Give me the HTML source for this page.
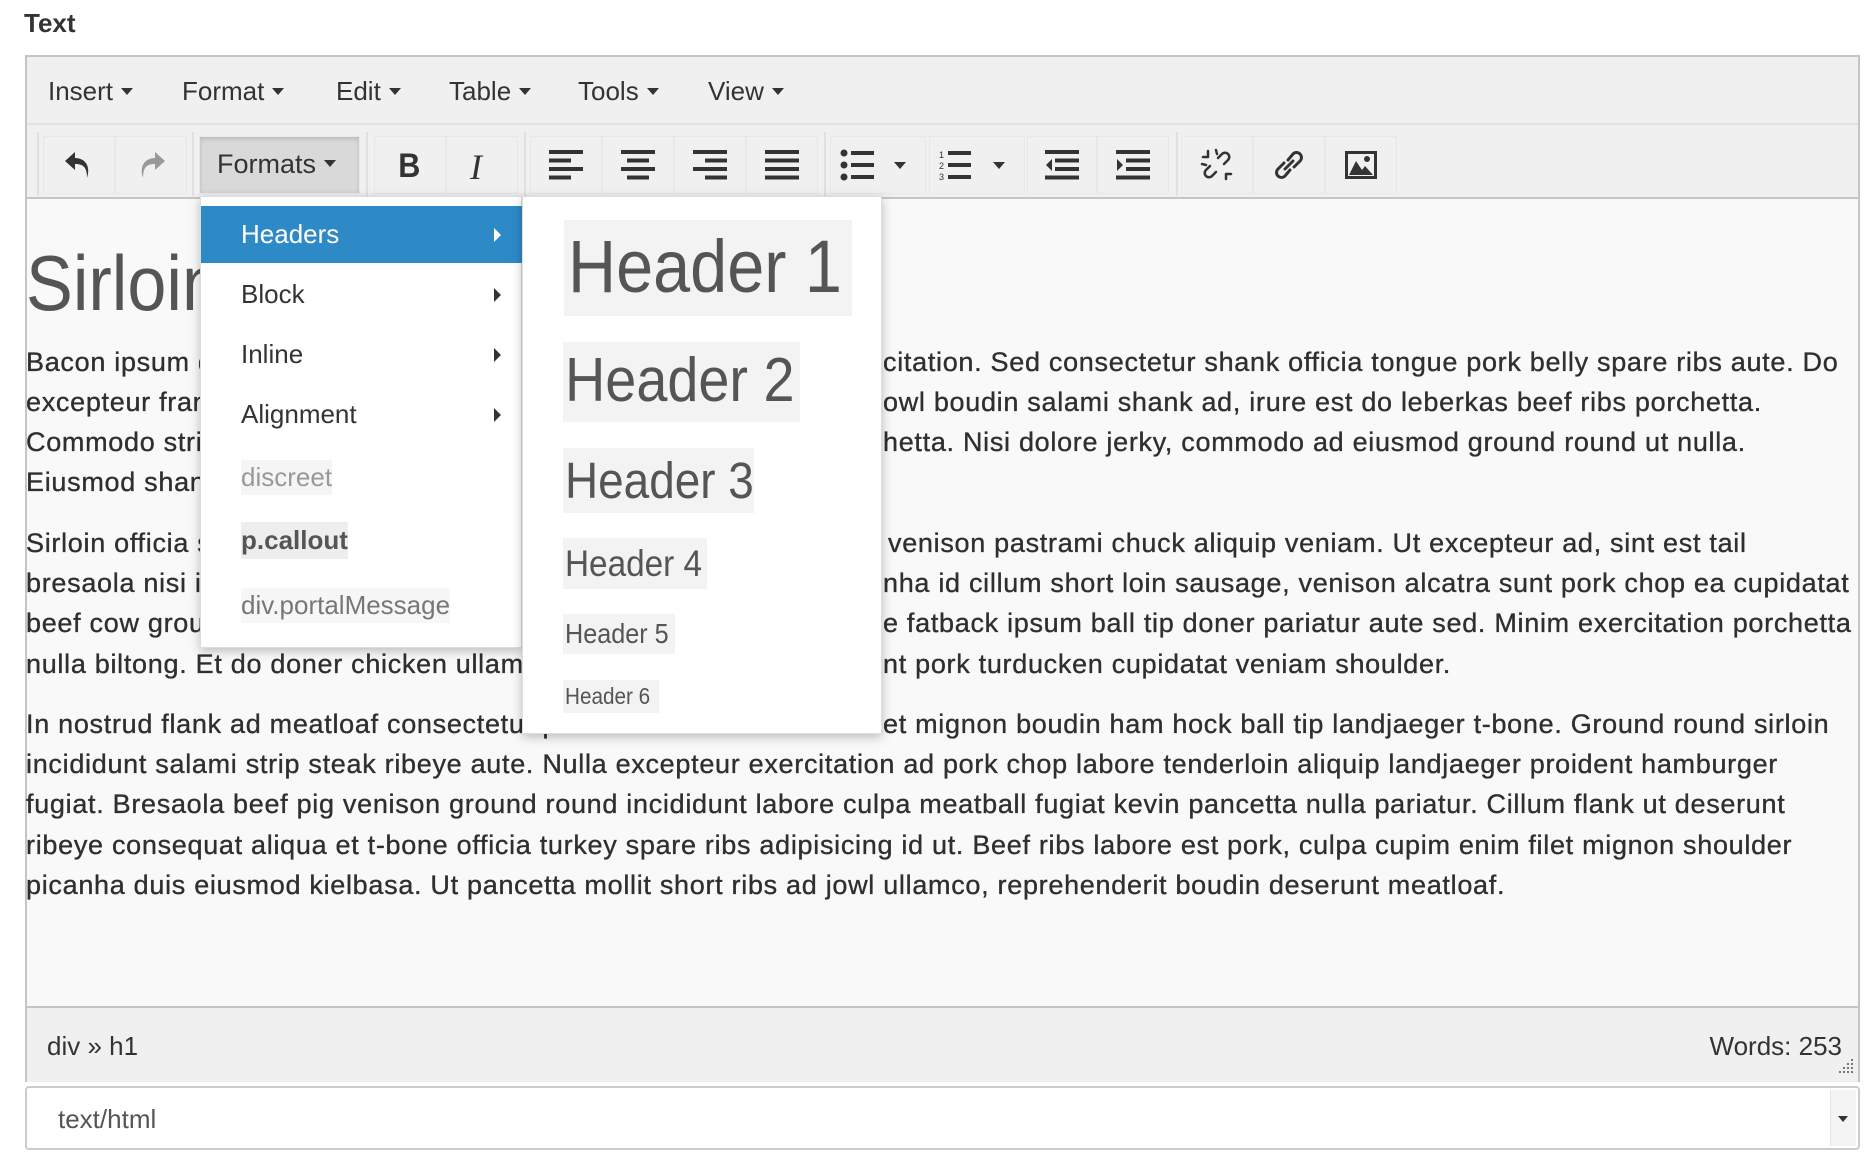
<!DOCTYPE html>
<html><head><meta charset="utf-8"><style>
*{box-sizing:border-box;margin:0;padding:0}
body{width:1872px;height:1158px;background:#fff;position:relative;overflow:hidden;font-family:"Liberation Sans",Arial,sans-serif;color:#333}
.a{position:absolute;white-space:nowrap}
.lbl{left:24px;top:8px;font-size:26px;font-weight:bold;color:#333}
.box{left:25px;top:55px;width:1835px;height:1027px;border:2px solid #c5c5c5;background:#f9f9f9}
.menubar{left:27px;top:57px;width:1831px;height:68px;background:#f0f0f0;border-bottom:2px solid #e2e2e2}
.mi{font-size:26px;color:#333;top:76px}
.caret{display:inline-block;width:0;height:0;border-left:6px solid transparent;border-right:6px solid transparent;border-top:7px solid #333;vertical-align:middle;margin-left:8px;margin-top:-4px}
.toolbar{left:27px;top:125px;width:1831px;height:74px;background:#f0f0f0;border-bottom:2px solid #c5c5c5}
.btn{top:136px;height:58px;border:1px solid #e8e8e8;background:#f0f0f0}
.sep{top:132px;width:2px;height:64px;background:#e0e0e0}
.btn svg{position:absolute;left:50%;top:50%;transform:translate(-50%,-50%)}
.p{font-size:27px;color:#2f2f2f;line-height:40px;letter-spacing:0.7px;-webkit-text-stroke:0.35px #2f2f2f}
.status{left:27px;top:1006px;width:1831px;height:76px;background:#f0f0f0;border-top:2px solid #c5c5c5}
.sel{left:25px;top:1086px;width:1835px;height:64px;border:2px solid #ccc;border-radius:4px;background:#fff}
.menu{background:#fff;box-shadow:0 3px 10px rgba(0,0,0,.25);border:1px solid #ddd}
.it{font-size:26px;color:#333;left:241px}
.arr{width:0;height:0;border-top:7px solid transparent;border-bottom:7px solid transparent;border-left:7px solid #333;left:494px}
.h{background:#f3f3f3;color:#555;left:563px;line-height:1;padding:4px 2px}
.h span{display:inline-block;transform:scaleX(0.9);transform-origin:left center}
</style></head><body>
<div class="a lbl">Text</div>
<div class="a box"></div>
<div class="a menubar"></div>
<div class="a mi" style="left:48px">Insert<span class="caret"></span></div>
<div class="a mi" style="left:182px">Format<span class="caret"></span></div>
<div class="a mi" style="left:336px">Edit<span class="caret"></span></div>
<div class="a mi" style="left:449px">Table<span class="caret"></span></div>
<div class="a mi" style="left:578px">Tools<span class="caret"></span></div>
<div class="a mi" style="left:708px">View<span class="caret"></span></div>

<div class="a toolbar"></div>
<div class="a sep" style="left:37px"></div>
<div class="a sep" style="left:192px"></div>
<div class="a sep" style="left:366px"></div>
<div class="a sep" style="left:524px"></div>
<div class="a sep" style="left:824px"></div>
<div class="a sep" style="left:1176px"></div>

<div class="a btn" style="left:43px;width:72px"><svg width="32" height="34" viewBox="0 0 32 34"><path d="M12 4 L2 13 L12 22 L12 16 C20 16 24 19 24 30 C28 18 22 10 12 10 Z" fill="#333"/></svg></div>
<div class="a btn" style="left:115px;width:72px"><svg width="32" height="34" viewBox="0 0 32 34"><path d="M20 4 L30 13 L20 22 L20 16 C12 16 8 19 8 30 C4 18 10 10 20 10 Z" fill="#999"/></svg></div>
<div class="a btn" style="left:199px;width:161px;background:#d9d9d9;box-shadow:inset 0 2px 4px rgba(0,0,0,.15)"></div>
<div class="a" style="left:217px;top:149px;font-size:27px;color:#333">Formats<span class="caret"></span></div>
<div class="a btn" style="left:374px;width:72px"><div class="a" style="left:22px;top:10px;font-size:34px;font-weight:bold;color:#333;transform:scaleX(0.9)">B</div></div>
<div class="a btn" style="left:446px;width:72px"><div class="a" style="left:23px;top:9px;font-size:36px;font-style:italic;font-family:'Liberation Serif',serif;color:#333">I</div></div>
<div class="a btn" style="left:530px;width:72px"><svg width="34" height="30"><g fill="#333"><rect x="0" y="0" width="34" height="4"/><rect x="0" y="8.5" width="22" height="4"/><rect x="0" y="17" width="34" height="4"/><rect x="0" y="25.5" width="22" height="4"/></g></svg></div>
<div class="a btn" style="left:602px;width:72px"><svg width="34" height="30"><g fill="#333"><rect x="0" y="0" width="34" height="4"/><rect x="6" y="8.5" width="22" height="4"/><rect x="0" y="17" width="34" height="4"/><rect x="6" y="25.5" width="22" height="4"/></g></svg></div>
<div class="a btn" style="left:674px;width:72px"><svg width="34" height="30"><g fill="#333"><rect x="0" y="0" width="34" height="4"/><rect x="12" y="8.5" width="22" height="4"/><rect x="0" y="17" width="34" height="4"/><rect x="12" y="25.5" width="22" height="4"/></g></svg></div>
<div class="a btn" style="left:746px;width:72px"><svg width="34" height="30"><g fill="#333"><rect x="0" y="0" width="34" height="4"/><rect x="0" y="8.5" width="34" height="4"/><rect x="0" y="17" width="34" height="4"/><rect x="0" y="25.5" width="34" height="4"/></g></svg></div>
<div class="a btn" style="left:830px;width:96px"><svg width="66" height="32" style="left:45%"><g fill="#333"><circle cx="4" cy="4" r="3.5"/><circle cx="4" cy="16" r="3.5"/><circle cx="4" cy="28" r="3.5"/><rect x="11" y="2" width="23" height="4"/><rect x="11" y="14" width="23" height="4"/><rect x="11" y="26" width="23" height="4"/><path d="M54 13h12l-6 7z"/></g></svg></div>
<div class="a btn" style="left:929px;width:96px"><svg width="66" height="32" style="left:45%"><g fill="#333"><text x="0" y="9" font-size="9" font-family="Liberation Sans">1</text><text x="0" y="20" font-size="9" font-family="Liberation Sans">2</text><text x="0" y="31" font-size="9" font-family="Liberation Sans">3</text><rect x="9" y="2" width="23" height="4"/><rect x="9" y="14" width="23" height="4"/><rect x="9" y="26" width="23" height="4"/><path d="M54 13h12l-6 7z"/></g></svg></div>
<div class="a btn" style="left:1027px;width:70px"><svg width="34" height="30"><g fill="#333"><rect x="0" y="0" width="34" height="4"/><rect x="10" y="8.5" width="24" height="4"/><rect x="10" y="17" width="24" height="4"/><rect x="0" y="25.5" width="34" height="4"/><path d="M7 9v12l-6-6z"/></g></svg></div>
<div class="a btn" style="left:1097px;width:72px"><svg width="34" height="30"><g fill="#333"><rect x="0" y="0" width="34" height="4"/><rect x="10" y="8.5" width="24" height="4"/><rect x="10" y="17" width="24" height="4"/><rect x="0" y="25.5" width="34" height="4"/><path d="M1 9v12l6-6z"/></g></svg></div>
<div class="a btn" style="left:1181px;width:72px"><svg width="34" height="34" viewBox="0 0 34 34"><g fill="none" stroke="#333" stroke-width="2.5" stroke-linecap="round"><path d="M18 10 L22 6 a4 4 0 0 1 6 6 L24 16"/><path d="M16 24 L12 28 a4 4 0 0 1 -6 -6 L10 18"/><path d="M8 3v5M3 9h5M26 26h5M26 26v5M16 2l1 4M2 16l4 1"/></g></svg></div>
<div class="a btn" style="left:1253px;width:72px"><svg width="34" height="34" viewBox="0 0 34 34"><g fill="none" stroke="#333" stroke-width="3" stroke-linecap="round"><path d="M16 12 L21 6 a4.5 4.5 0 0 1 7 7 L22 19"/><path d="M18 22 L13 28 a4.5 4.5 0 0 1 -7 -7 L12 15"/><path d="M13 21 L21 13"/></g></svg></div>
<div class="a btn" style="left:1325px;width:72px"><svg width="32" height="28"><rect x="1.5" y="1.5" width="29" height="25" fill="none" stroke="#333" stroke-width="3"/><path d="M4 24 L11 10 L17 19 L20 15 L28 24Z" fill="#333"/><circle cx="22" cy="8" r="3" fill="#333"/></svg></div>

<!-- content -->
<div class="a" style="left:26px;top:238px;font-size:78px;color:#555;transform:scaleX(0.9);transform-origin:left">Sirloin Shank Pork</div>
<div class="a p" style="left:26px;top:342px">Bacon ipsum dolor amet venison ham hock exercitation</div>
<div class="a p" style="left:26px;top:382px">excepteur frankfurter tenderloin ham jowl</div>
<div class="a p" style="left:26px;top:422px">Commodo strip steak pancetta porchetta</div>
<div class="a p" style="left:26px;top:462px">Eiusmod shank tri-tip</div>
<div class="a p" style="left:883px;top:342px">citation. Sed consectetur shank officia tongue pork belly spare ribs aute. Do</div>
<div class="a p" style="left:883px;top:382px">owl boudin salami shank ad, irure est do leberkas beef ribs porchetta.</div>
<div class="a p" style="left:883px;top:422px">hetta. Nisi dolore jerky, commodo ad eiusmod ground round ut nulla.</div>

<div class="a p" style="left:26px;top:523px">Sirloin officia sausage ham</div>
<div class="a p" style="left:26px;top:563px">bresaola nisi incididunt picanha</div>
<div class="a p" style="left:26px;top:603px">beef cow ground round</div>
<div class="a p" style="left:26px;top:644px">nulla biltong. Et do doner chicken ullamco tri-tip</div>
<div class="a p" style="left:888px;top:523px">venison pastrami chuck aliquip veniam. Ut excepteur ad, sint est tail</div>
<div class="a p" style="left:883px;top:563px">nha id cillum short loin sausage, venison alcatra sunt pork chop ea cupidatat</div>
<div class="a p" style="left:883px;top:603px">e fatback ipsum ball tip doner pariatur aute sed. Minim exercitation porchetta</div>
<div class="a p" style="left:883px;top:644px">nt pork turducken cupidatat veniam shoulder.</div>

<div class="a p" style="left:26px;top:704px">In nostrud flank ad meatloaf consectetur pork loin</div>
<div class="a p" style="left:883px;top:704px">et mignon boudin ham hock ball tip landjaeger t-bone. Ground round sirloin</div>
<div class="a p" style="left:26px;top:744px">incididunt salami strip steak ribeye aute. Nulla excepteur exercitation ad pork chop labore tenderloin aliquip landjaeger proident hamburger</div>
<div class="a p" style="left:26px;top:784px">fugiat. Bresaola beef pig venison ground round incididunt labore culpa meatball fugiat kevin pancetta nulla pariatur. Cillum flank ut deserunt</div>
<div class="a p" style="left:26px;top:825px">ribeye consequat aliqua et t-bone officia turkey spare ribs adipisicing id ut. Beef ribs labore est pork, culpa cupim enim filet mignon shoulder</div>
<div class="a p" style="left:26px;top:865px">picanha duis eiusmod kielbasa. Ut pancetta mollit short ribs ad jowl ullamco, reprehenderit boudin deserunt meatloaf.</div>

<div class="a status"></div>
<div class="a" style="left:47px;top:1031px;font-size:26px;color:#333">div » h1</div>
<div class="a" style="right:30px;top:1031px;font-size:26px;color:#333">Words: 253</div>
<svg class="a" style="left:1838px;top:1058px" width="16" height="16"><g fill="#777"><rect x="13" y="1" width="2" height="2"/><rect x="13" y="5" width="2" height="2"/><rect x="9" y="5" width="2" height="2"/><rect x="13" y="9" width="2" height="2"/><rect x="9" y="9" width="2" height="2"/><rect x="5" y="9" width="2" height="2"/><rect x="13" y="13" width="2" height="2"/><rect x="9" y="13" width="2" height="2"/><rect x="5" y="13" width="2" height="2"/><rect x="1" y="13" width="2" height="2"/></g></svg>

<div class="a sel"></div>
<div class="a" style="left:58px;top:1104px;font-size:26px;color:#555">text/html</div>
<div class="a" style="left:1830px;top:1090px;width:26px;height:56px;background:#f4f4f4;border-left:1px solid #e5e5e5"></div>
<div class="a" style="left:1838px;top:1116px;width:0;height:0;border-left:5px solid transparent;border-right:5px solid transparent;border-top:6px solid #333"></div>

<!-- menus -->
<div class="a menu" style="left:200px;top:196px;width:322px;height:452px"></div>
<div class="a" style="left:201px;top:206px;width:321px;height:57px;background:#2d8ac7"></div>
<div class="a it" style="top:219px;color:#fff">Headers</div>
<div class="a arr" style="top:228px;border-left-color:#fff"></div>
<div class="a it" style="top:279px">Block</div><div class="a arr" style="top:288px"></div>
<div class="a it" style="top:339px">Inline</div><div class="a arr" style="top:348px"></div>
<div class="a it" style="top:399px">Alignment</div><div class="a arr" style="top:408px"></div>
<div class="a it" style="top:460px;color:#999;background:#f5f5f5;padding:2px 0">discreet</div>
<div class="a it" style="top:522px;color:#555;background:#eee;font-weight:bold;padding:3px 0">p.callout</div>
<div class="a it" style="top:588px;color:#777;background:#f7f7f7;padding:2px 0">div.portalMessage</div>
<div class="a" style="left:522px;top:206px;width:10px;height:119px;background:#aaa"></div>

<div class="a menu" style="left:522px;top:196px;width:360px;height:538px"></div>
<div class="a h" style="top:220px;font-size:74px;left:564px;padding:10px 4px 12px;width:288px"><span>Header 1</span></div>
<div class="a h" style="top:342px;font-size:62px;padding:8px 2px 10px;width:237px"><span>Header 2</span></div>
<div class="a h" style="top:448px;font-size:51px;padding:7px 2px 7px;width:191px"><span>Header 3</span></div>
<div class="a h" style="top:538px;font-size:37px;padding:7px 2px 7px;width:144px"><span>Header 4</span></div>
<div class="a h" style="top:614px;font-size:28px;padding:6px 2px 6px;width:112px"><span>Header 5</span></div>
<div class="a h" style="top:680px;font-size:23px;padding:5px 2px 5px;width:96px"><span>Header 6</span></div>
</body></html>
